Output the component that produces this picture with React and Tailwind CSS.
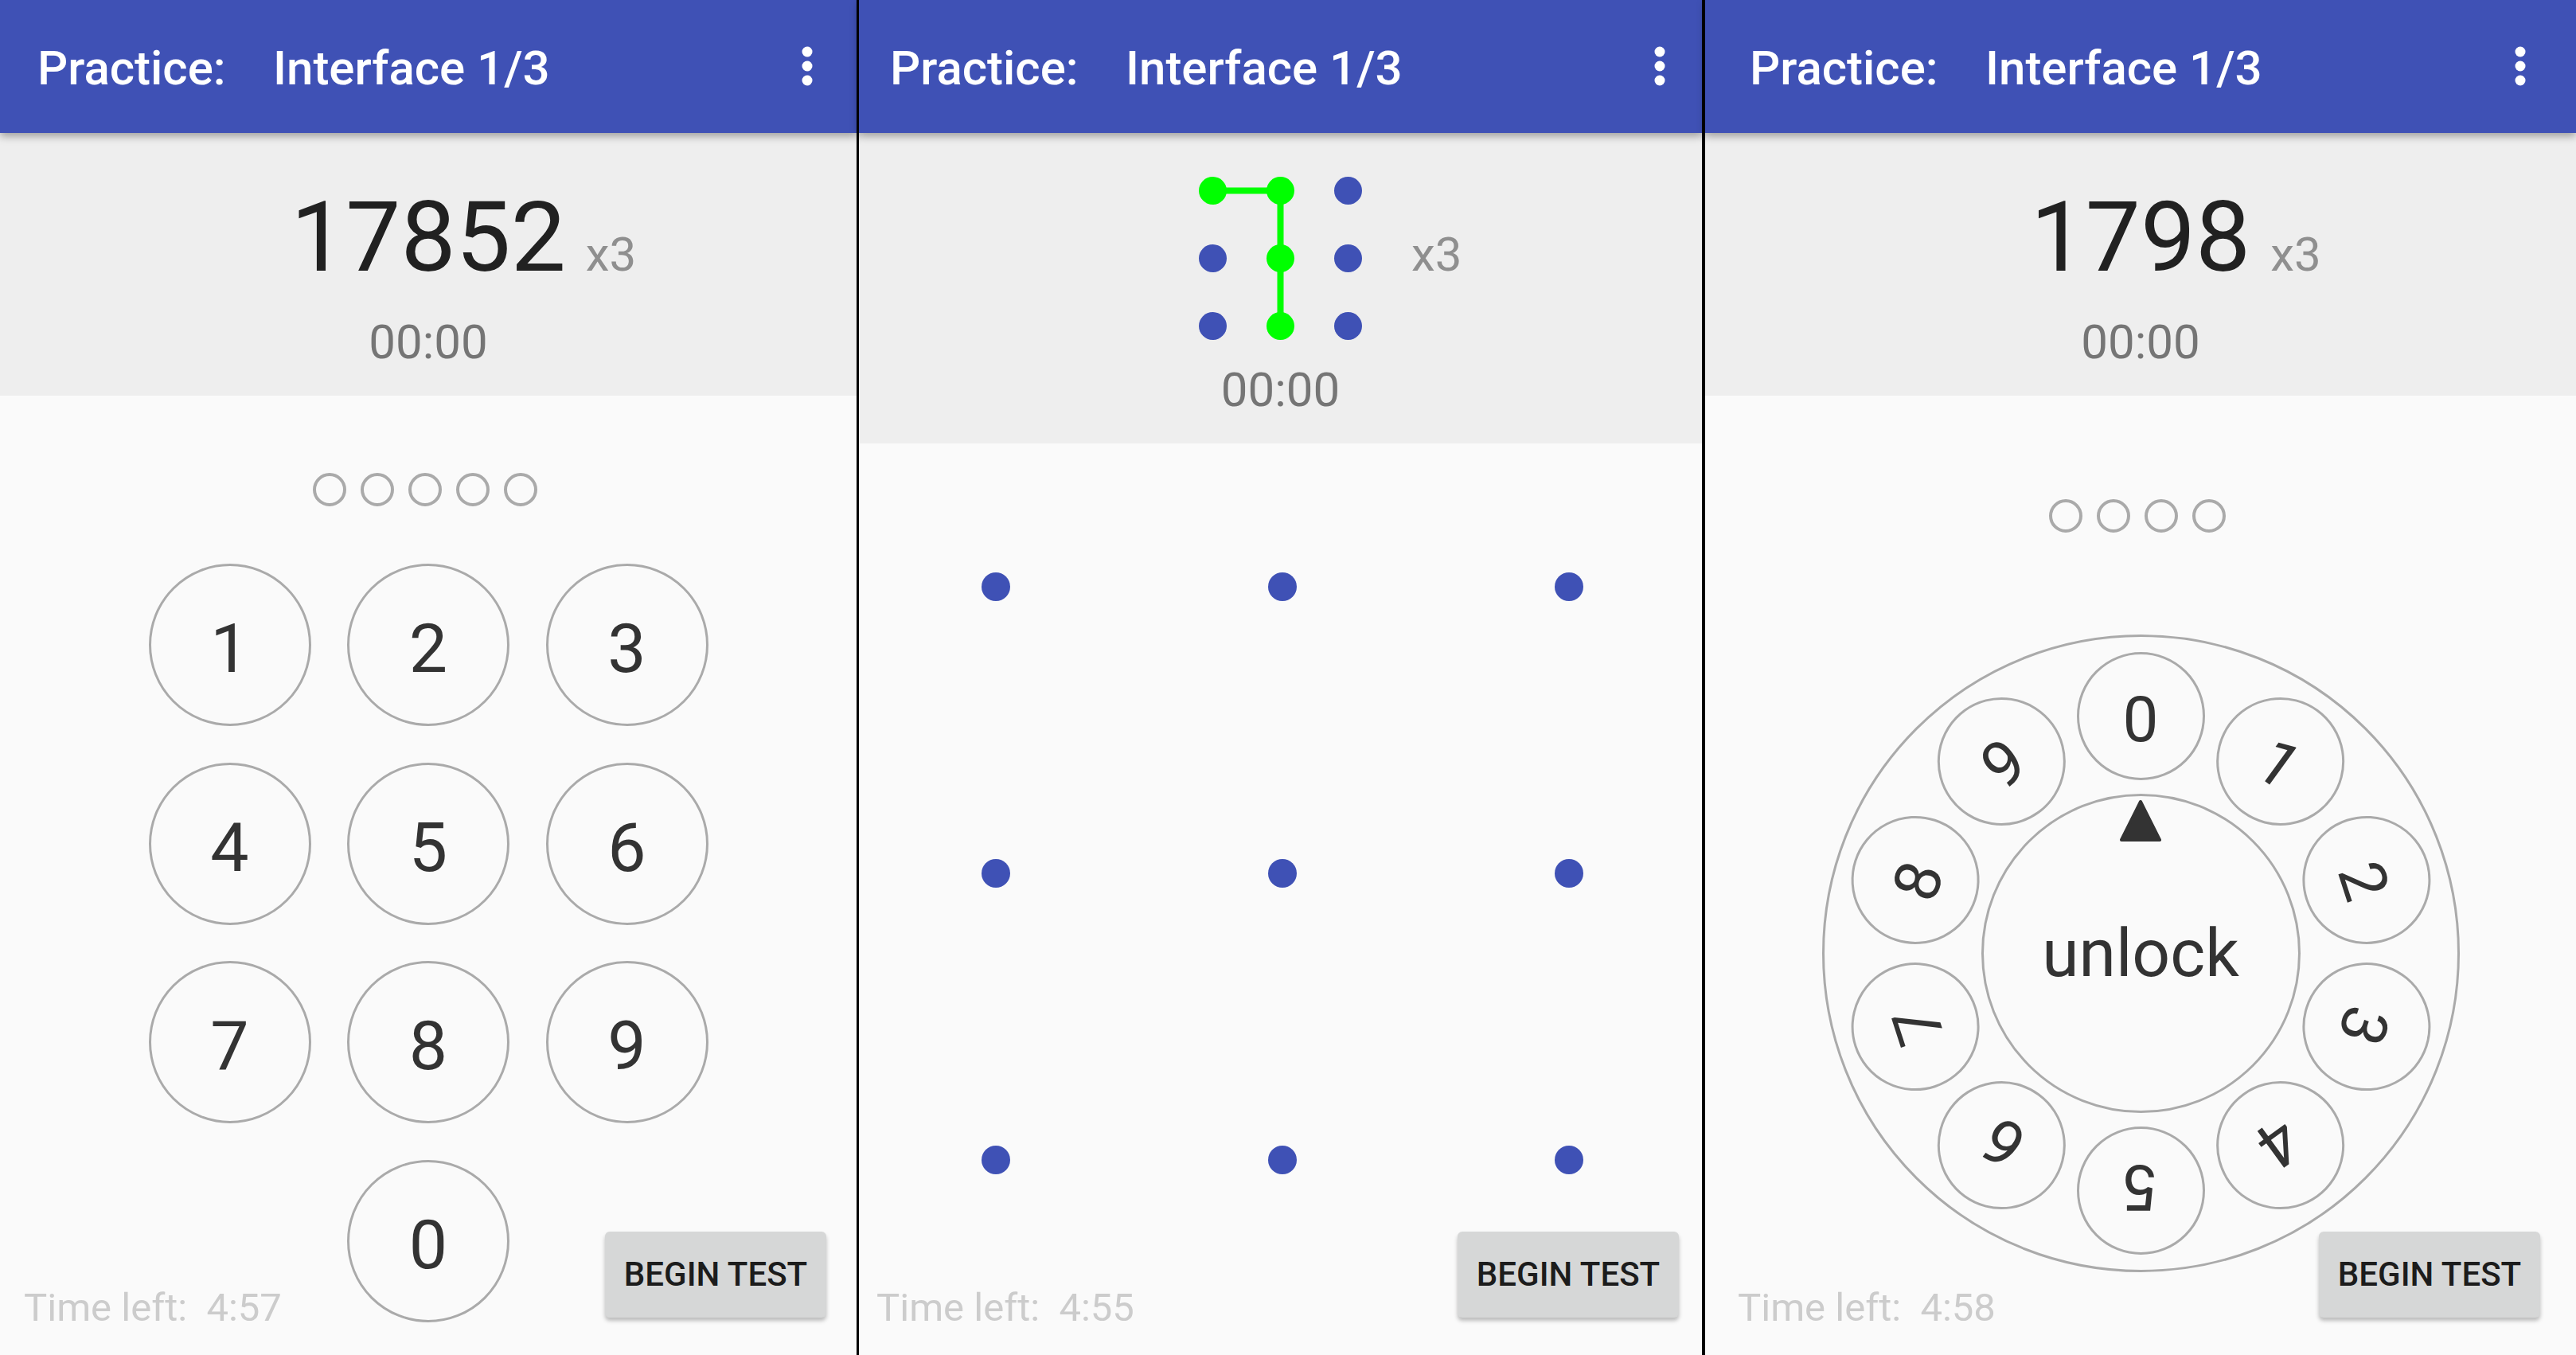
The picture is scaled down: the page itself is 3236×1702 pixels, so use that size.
import React from "react";

function MoreVert() {
  return (
    <svg width="72" height="72" viewBox="0 0 72 72" className="block">
      <circle cx="36" cy="18" r="6.5" fill="white" />
      <circle cx="36" cy="36" r="6.5" fill="white" />
      <circle cx="36" cy="54" r="6.5" fill="white" />
    </svg>
  );
}

function Header({ padClass }) {
  return (
    <div
      className={`relative z-10 h-[167px] shrink-0 bg-[#3F51B5] shadow-[0_4px_10px_rgba(0,0,0,0.35)] flex items-start justify-between ${padClass}`}
    >
      <div className="mt-[56px] flex text-white text-[60px] leading-none font-medium whitespace-nowrap">
        <span className="w-[296px]">Practice:</span>
        <span>Interface 1/3</span>
      </div>
      <div className="mt-[47px]">
        <MoreVert />
      </div>
    </div>
  );
}

function NumberLine({ value }) {
  return (
    <div className="relative mt-[69.5px] text-[123px] leading-none text-[#212121]">
      {value}
      <span className="absolute left-full top-[53px] ml-[25px] text-[60px] leading-none text-[#8F8F8F]">
        x3
      </span>
    </div>
  );
}

function PinRow({ count, mt }) {
  return (
    <div className={`flex gap-[18px] pr-[8px] ${mt}`}>
      {Array.from({ length: count }).map((_, i) => (
        <div
          key={i}
          className="w-[42px] h-[42px] rounded-full border-[4px] border-[#AAAAAA]"
        />
      ))}
    </div>
  );
}

function Key({ d }) {
  return (
    <div className="w-[204px] h-[204px] rounded-full border-[3px] border-[#AAAAAA] flex items-center justify-center pt-[10px] text-[86px] leading-none text-[#333333]">
      {d}
    </div>
  );
}

function Footer({ time, cls }) {
  return (
    <div className={`w-full flex justify-between items-start ${cls}`}>
      <div className="mt-[70.5px] text-[49px] leading-none text-[#CCCCCC] whitespace-pre">
        {"Time left:  " + time}
      </div>
      <div className="w-[278px] h-[108px] rounded-[6px] bg-[#D6D7D7] shadow-[0_4px_5px_rgba(0,0,0,0.25)] flex items-center justify-center text-[42px] font-medium leading-none text-[#1C1C1C]">
        BEGIN TEST
      </div>
    </div>
  );
}

function MiniPattern() {
  const pos = [17.5, 102.5, 187.5];
  const green = new Set(["0,0", "1,0", "1,1", "1,2"]);
  return (
    <svg width="205" height="205" viewBox="0 0 205 205" className="block">
      <polyline
        points="17.5,17.5 102.5,17.5 102.5,102.5 102.5,187.5"
        fill="none"
        stroke="#00FF00"
        strokeWidth="8"
      />
      {pos.map((y, r) =>
        pos.map((x, c) => (
          <circle
            key={`${c}-${r}`}
            cx={x}
            cy={y}
            r="17.5"
            fill={green.has(`${c},${r}`) ? "#00FF00" : "#3F51B5"}
          />
        ))
      )}
    </svg>
  );
}

function Dial() {
  const digits = [0, 1, 2, 3, 4, 5, 6, 7, 8, 9];
  return (
    <div className="relative w-[801px] h-[801px] rounded-full border-[3px] border-[#AAAAAA] flex items-center justify-center">
      <div className="relative w-[401px] h-[401px] rounded-full border-[3px] border-[#AAAAAA] flex items-center justify-center">
        <svg
          className="absolute top-[3.5px] left-1/2 -translate-x-1/2"
          width="54"
          height="54"
          viewBox="0 0 54 54"
        >
          <polygon
            points="27,3 51,51 3,51"
            fill="#333333"
            stroke="#333333"
            strokeWidth="4"
            strokeLinejoin="round"
          />
        </svg>
        <span className="text-[84px] leading-none text-[#333333]">unlock</span>
      </div>
      {digits.map((d) => (
        <div
          key={d}
          className="absolute left-1/2 top-1/2 w-[161px] h-[161px] -ml-[80.5px] -mt-[80.5px] rounded-full border-[3px] border-[#AAAAAA] flex items-center justify-center pt-[8px] text-[80px] leading-none text-[#333333]"
          style={{ transform: `rotate(${d * 36}deg) translateY(-298px)` }}
        >
          {d}
        </div>
      ))}
    </div>
  );
}

function Panel1() {
  return (
    <div className="w-[1076px] h-[1702px] shrink-0 flex flex-col bg-[#FAFAFA]">
      <Header padClass="pl-[47px] pr-[26px]" />
      <div className="h-[330px] shrink-0 bg-[#EEEEEE] flex flex-col items-center">
        <NumberLine value="17852" />
        <div className="mt-[40px] text-[60px] leading-none text-[#757575]">00:00</div>
      </div>
      <div className="flex-1 flex flex-col items-center">
        <PinRow count={5} mt="mt-[97px]" />
        <div className="mt-[72px] grid grid-cols-[204px_204px_204px] gap-[45.5px]">
          {[1, 2, 3, 4, 5, 6, 7, 8, 9].map((d) => (
            <Key key={d} d={d} />
          ))}
          <div />
          <Key d={0} />
          <div />
        </div>
        <Footer time="4:57" cls="-mt-[113.5px] pl-[30px] pr-[38px]" />
      </div>
    </div>
  );
}

function Panel2() {
  return (
    <div className="w-[1059px] h-[1702px] shrink-0 flex flex-col bg-[#FAFAFA]">
      <Header padClass="pl-[39px] pr-[17px]" />
      <div className="h-[390px] shrink-0 bg-[#EEEEEE] flex flex-col items-center">
        <div className="relative mt-[54.5px]">
          <MiniPattern />
          <span className="absolute left-full top-[68.5px] ml-[62px] text-[60px] leading-none text-[#8F8F8F]">
            x3
          </span>
        </div>
        <div className="mt-[33px] text-[60px] leading-none text-[#757575]">00:00</div>
      </div>
      <div className="flex-1 flex flex-col items-center">
        <div className="mt-[162px] pl-[5px] grid grid-cols-[36px_36px_36px] gap-[324px]">
          {Array.from({ length: 9 }).map((_, i) => (
            <div key={i} className="w-[36px] h-[36px] rounded-full bg-[#3F51B5]" />
          ))}
        </div>
        <Footer time="4:55" cls="mt-[72px] pl-[22px] pr-[29px]" />
      </div>
    </div>
  );
}

function Panel3() {
  return (
    <div className="w-[1094px] h-[1702px] shrink-0 flex flex-col bg-[#FAFAFA]">
      <Header padClass="pl-[56px] pr-[34px]" />
      <div className="h-[330px] shrink-0 bg-[#EEEEEE] flex flex-col items-center">
        <NumberLine value="1798" />
        <div className="mt-[40px] text-[60px] leading-none text-[#757575]">00:00</div>
      </div>
      <div className="flex-1 flex flex-col items-center">
        <PinRow count={4} mt="mt-[130px]" />
        <div className="mt-[128px]">
          <Dial />
        </div>
        <Footer time="4:58" cls="-mt-[51px] pl-[41px] pr-[45px]" />
      </div>
    </div>
  );
}

export default function App() {
  return (
    <div className="flex w-[3236px] h-[1702px] overflow-hidden font-[Roboto,sans-serif]">
      <Panel1 />
      <div className="w-[3px] shrink-0 bg-black" />
      <Panel2 />
      <div className="w-[4px] shrink-0 bg-black" />
      <Panel3 />
    </div>
  );
}
